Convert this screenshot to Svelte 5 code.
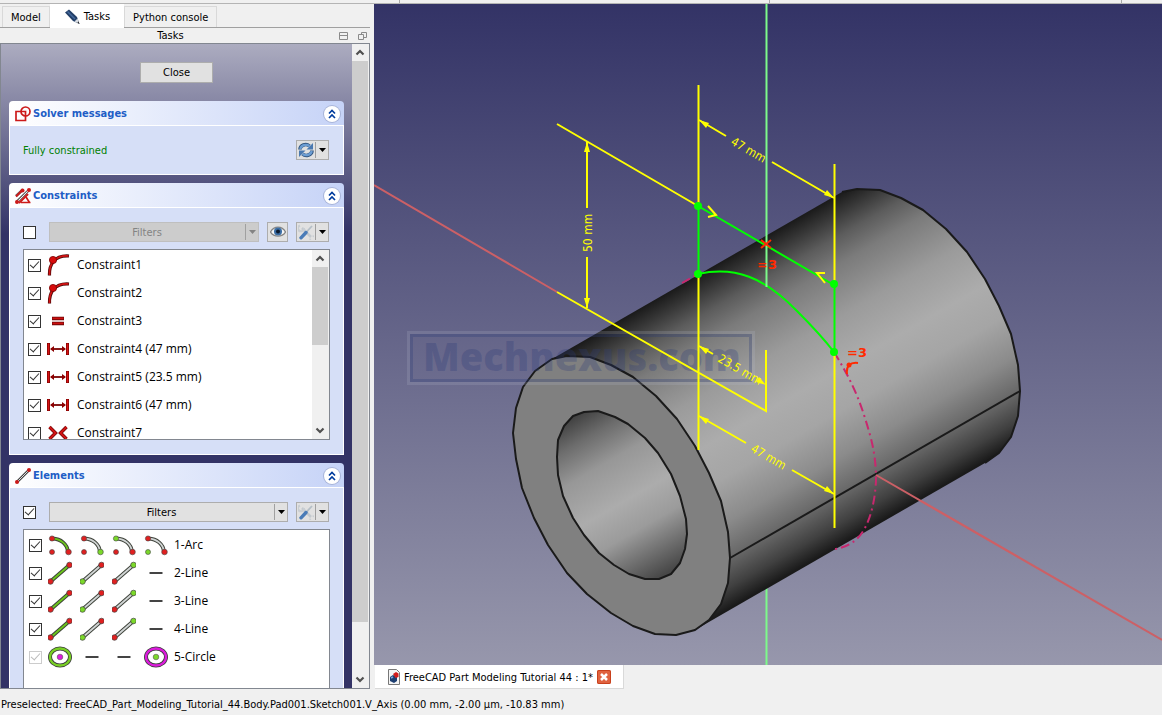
<script lang="ts">
	type Constraint = { name: string; icon: string; checked: boolean };
	type Element = { name: string; icons: string[]; checked: boolean; disabled?: boolean };

	const toolbars = [400, 370, 352];

	let constraints: Constraint[] = $state([
		{ name: 'Constraint1', icon: 'tangent', checked: true },
		{ name: 'Constraint2', icon: 'tangent', checked: true },
		{ name: 'Constraint3', icon: 'equal', checked: true },
		{ name: 'Constraint4 (47 mm)', icon: 'horizontal', checked: true },
		{ name: 'Constraint5 (23.5 mm)', icon: 'horizontal', checked: true },
		{ name: 'Constraint6 (47 mm)', icon: 'horizontal', checked: true },
		{ name: 'Constraint7', icon: 'symmetric', checked: true }
	]);

	let elements: Element[] = $state([
		{ name: '1-Arc', icons: ['arc-edge', 'arc-start', 'arc-end', 'arc-mid'], checked: true },
		{ name: '2-Line', icons: ['line-edge', 'line-start', 'line-end', 'none'], checked: true },
		{ name: '3-Line', icons: ['line-edge', 'line-start', 'line-end', 'none'], checked: true },
		{ name: '4-Line', icons: ['line-edge', 'line-start', 'line-end', 'none'], checked: true },
		{ name: '5-Circle', icons: ['circle-edge', 'none', 'none', 'circle-mid'], checked: true, disabled: true }
	]);

	let filterConstraints = $state(false);
	let filterElements = $state(true);

	// outline of the tube's front face, and the shift to its back face
	const face = [
		[567, 356], [590, 357], [611, 365], [633, 377], [656, 396], [677, 419], [695, 446], [709, 473],
		[721, 501], [728, 532], [730, 558], [728, 583], [721, 604], [709, 620], [695, 630], [676, 635],
		[655, 634], [633, 626], [611, 613], [587, 594], [567, 573], [548, 545], [534, 518], [522, 488],
		[516, 459], [513, 433], [516, 408], [523, 387], [535, 371], [552, 359]
	];
	const hole = [
		[557, 457], [558, 440], [564, 426], [573, 416], [584, 412], [598, 411], [615, 417], [628, 424],
		[645, 438], [658, 453], [671, 474], [680, 496], [686, 519], [687, 534], [685, 549], [680, 563],
		[671, 574], [659, 579], [645, 579], [629, 574], [614, 565], [599, 553], [584, 535], [573, 518],
		[563, 496], [558, 475]
	];
	const back = [face[29], ...face.slice(0, 15)].map(([x, y]) => [x + 290, y - 167]);
	const body = [face[29], ...back, face[14]];

	const pts = (list: number[][]) => list.map(p => p.join(',')).join(' ');

	const RED = '#e02020';
	const GREEN = '#7bd82a';
	const isMarked = (icon: string, part: string) => (icon.endsWith(part) ? GREEN : RED);
</script>

{#snippet dropArrow()}
	<svg class="drop" viewBox="0 0 7 4" aria-hidden="true"><path d="M0 0H7L3.5 4Z" fill="currentColor" /></svg>
{/snippet}

{#snippet chevron(up: boolean)}
	<svg class="chevron" viewBox="0 0 16 16" aria-hidden="true">
		<path d={up ? 'M4.500 10L8 6.500L11.500 10' : 'M4.500 6L8 9.500L11.500 6'} fill="none" stroke="#505050" stroke-width="2.200" />
	</svg>
{/snippet}

{#snippet collapse(title: string)}
	<button class="collapse" aria-label="Collapse {title}">
		<svg viewBox="0 0 16 16"><path d="M5 7.500L8 4.500L11 7.500M5 12L8 9L11 12" fill="none" stroke="#003c9e" stroke-width="1.700" /></svg>
	</button>
{/snippet}

{#snippet tools()}
	<button class="tool split" aria-label="Settings">
		<svg class="glyph" viewBox="0 0 16 16">
			<path d="M4 4L13 13" stroke="#c3c9ce" stroke-width="2.500" />
			<path d="M2 1.500A3 3 0 1 0 6 4" fill="none" stroke="#c9ced3" stroke-width="2" />
			<path d="M14.500 12A2.500 2.500 0 1 1 12 14.500" fill="none" stroke="#c9ced3" stroke-width="1.500" />
			<path d="M14 2L8 8.500" stroke="#b4bec6" stroke-width="1.800" />
			<path d="M8 8.500L3 13.800" stroke="#4a7cb8" stroke-width="3.400" stroke-linecap="round" />
		</svg>
		<span class="arrow">{@render dropArrow()}</span>
	</button>
{/snippet}

{#snippet constraintIcon(kind: string)}
	<svg class="icon" viewBox="0 0 24 24" aria-hidden="true">
		{#if kind === 'tangent'}
			<path d="M2.500 22.500C2 12 7 2 22 3" fill="none" stroke="#4a0505" stroke-width="3.200" />
			<path d="M2.500 22C2 12 7 2 21.500 3" fill="none" stroke="#d41414" stroke-width="1.700" />
			<circle cx="6" cy="7" r="3.600" fill="#d80c0c" stroke="#7a0000" stroke-width=".8" />
		{:else if kind === 'equal'}
			<path d="M5 9.500H17M5 14.500H17" stroke="#6e0505" stroke-width="3.400" />
			<path d="M5.500 9.300H16.500M5.500 14.300H16.500" stroke="#cc1010" stroke-width="1.800" />
		{:else if kind === 'horizontal'}
			<path d="M1.500 6V18M20.500 6V18" stroke="#7a0000" stroke-width="3" />
			<path d="M1.500 6.500V17.500M20.500 6.500V17.500" stroke="#d81414" stroke-width="1.600" />
			<path d="M4 12H18" stroke="#7a0000" stroke-width="1.800" />
			<path d="M3 12L7 9V15ZM19 12L15 9V15Z" fill="#8c0000" />
		{:else}
			<path d="M2.500 6L8.500 12L2.500 18M19.500 6L13.500 12L19.500 18" fill="none" stroke="#6e0505" stroke-width="3.400" />
			<path d="M2.500 6L8.500 12L2.500 18M19.500 6L13.500 12L19.500 18" fill="none" stroke="#d01414" stroke-width="2" />
		{/if}
	</svg>
{/snippet}

{#snippet elementIcon(kind: string)}
	<svg class="icon" viewBox="0 0 24 24" aria-hidden="true">
		{#if kind.startsWith('arc')}
			<path d="M4.500 5.500C13 6 19 11 20 18.500" fill="none" stroke="#3c4038" stroke-width="3.800" />
			<path d="M4.500 5.500C13 6 19 11 20 18.500" fill="none" stroke={kind === 'arc-edge' ? '#6cc41c' : '#d0d4d4'} stroke-width="1.900" />
			<circle cx="4" cy="5.500" r="2.600" fill={isMarked(kind, 'end')} stroke="#444" stroke-width=".6" />
			<circle cx="20.500" cy="19" r="2.800" fill={isMarked(kind, 'start')} stroke="#444" stroke-width=".6" />
			<circle cx="4" cy="19" r="2.500" fill={isMarked(kind, 'mid')} stroke="#444" stroke-width=".6" />
		{:else if kind.startsWith('line')}
			<path d="M2.500 20.500L21.500 4" stroke="#3c4038" stroke-width="3.800" />
			<path d="M2.500 20.500L21.500 4" stroke={kind === 'line-edge' ? '#6cc41c' : '#d0d4d4'} stroke-width="1.900" />
			<circle cx="2.500" cy="20.500" r="2.800" fill={isMarked(kind, 'start')} stroke="#444" stroke-width=".7" />
			<circle cx="21.500" cy="4" r="2.800" fill={isMarked(kind, 'end')} stroke="#444" stroke-width=".7" />
		{:else if kind.startsWith('circle')}
			<ellipse cx="12" cy="12" rx="10" ry="8.500" fill="none" stroke="#3c3c3c" stroke-width="4" />
			<ellipse cx="12" cy="12" rx="10" ry="8.500" fill="none" stroke={kind === 'circle-edge' ? '#78cf24' : '#dc1cdc'} stroke-width="2.300" />
			<circle cx="12" cy="12" r="2.800" fill={kind === 'circle-edge' ? '#dc1cdc' : GREEN} stroke="#555" stroke-width=".6" />
		{:else}
			<path d="M5.500 12H18.500" stroke="#444" stroke-width="2" />
		{/if}
	</svg>
{/snippet}

<div class="app">
	<div class="toolbars">
		{#each toolbars as width}
			<span style="width: {width}px"></span>
		{/each}
	</div>

	<main>
		<aside class="dock">
			<div class="tabs" role="tablist">
				<button class="tab" role="tab" aria-selected="false">Model</button>
				<button class="tab active" role="tab" aria-selected="true">
					<svg class="pencil" viewBox="0 0 16 16" aria-hidden="true">
						<path d="M1 3.500L5 .5L13 8L15.500 15L9 12Z" fill="#223f68" />
						<path d="M3.500 2.500L11 10" stroke="#44699c" stroke-width="1.500" />
						<path d="M10.500 12.500L13.500 9.500L15.500 15Z" fill="#d9dde2" />
						<path d="M13.300 13.800L14.600 12.500L15.500 15Z" fill="#222" />
					</svg>
					Tasks
				</button>
				<button class="tab" role="tab" aria-selected="false">Python console</button>
			</div>
			<div class="dock-title">
				<span>Tasks</span>
				<button aria-label="Dock panel">
					<svg viewBox="0 0 9 9"><path d="M.5 1.500H8.500V8.500H.5ZM.5 4.500H8.500" fill="none" stroke="#8a8a8a" /></svg>
				</button>
				<button aria-label="Float panel">
					<svg viewBox="0 0 9 9"><path d="M.5 3.500H5.500V8.500H.5ZM3.500 3V1.500H8.500V6.500H6" fill="none" stroke="#8a8a8a" /></svg>
				</button>
			</div>

			<div class="task-view">
				<div class="task-content">
					<button class="close">Close</button>

					<section class="box">
						<header>
							<svg class="head-icon" viewBox="0 0 16 16" aria-hidden="true">
								<path d="M1 5.500H10.500V14.500H1Z" fill="none" stroke="#cc1a1a" stroke-width="1.700" />
								<circle cx="10.500" cy="5.500" r="4.500" fill="none" stroke="#cc1a1a" stroke-width="1.700" />
							</svg>
							<h2>Solver messages</h2>
							{@render collapse('Solver messages')}
						</header>
						<div class="box-body">
							<div class="controls">
								<span class="solved">Fully constrained</span>
								<button class="tool split" aria-label="Update">
									<svg class="glyph" viewBox="0 0 16 16">
										<path d="M2 7.500C2 3 8 1 11.500 4" fill="none" stroke="#31557f" stroke-width="3.600" />
										<path d="M2.300 7C2.800 3.200 8 1.500 11.500 4" fill="none" stroke="#6c9dd2" stroke-width="2.200" />
										<path d="M15 1V7.500H8.500Z" fill="#4a79b0" />
										<path d="M14 8.500C14 13 8 15 4.500 12" fill="none" stroke="#31557f" stroke-width="3.600" />
										<path d="M13.700 9C13.200 12.800 8 14.500 4.500 12" fill="none" stroke="#6c9dd2" stroke-width="2.200" />
										<path d="M1 15V8.500H7.500Z" fill="#4a79b0" />
									</svg>
									<span class="arrow">{@render dropArrow()}</span>
								</button>
							</div>
						</div>
					</section>

					<section class="box">
						<header>
							<svg class="head-icon" viewBox="0 0 16 16" aria-hidden="true">
								<path d="M1 8L8 1.500M2 13.500L13.500 2.500" stroke="#666" stroke-width="2.600" />
								<path d="M1 8.500L7 2.500M4 15L13 6" stroke="#cc1a1a" stroke-width="2" />
								<path d="M2 14L14 2" stroke="#eee" stroke-width="1" />
								<path d="M6 14.500H15.500M11 9L14.500 14.500" stroke="#cc1a1a" stroke-width="1.700" />
								<circle cx="7.500" cy="2.500" r="2" fill="#cc1a1a" /><circle cx="14" cy="2" r="2" fill="#cc1a1a" />
								<circle cx="2" cy="14" r="2" fill="#cc1a1a" />
							</svg>
							<h2>Constraints</h2>
							{@render collapse('Constraints')}
						</header>
						<div class="box-body">
							<div class="controls">
								<input type="checkbox" aria-label="Enable constraint filters" bind:checked={filterConstraints} />
								<div class="filters" class:off={!filterConstraints}>
									<select aria-label="Constraint filters" disabled={!filterConstraints}><option>Filters</option></select>
									<span class="arrow">{@render dropArrow()}</span>
								</div>
								<button class="tool" aria-label="Show or hide constraints">
									<svg class="glyph" viewBox="0 0 16 16">
										<path d="M.5 8C4 1.500 12 1.500 15.500 8C12 13.500 4 13.500 .5 8Z" fill="#f5f5f5" stroke="#858585" stroke-width="1.300" />
										<circle cx="8" cy="7.500" r="4" fill="#3b6ea5" /><circle cx="8" cy="7.500" r="2" fill="#0c1b30" />
									</svg>
								</button>
								{@render tools()}
							</div>
							<div class="list">
								<ul>
									{#each constraints as item}
										<li>
											<label>
												<input type="checkbox" bind:checked={item.checked} />
												{@render constraintIcon(item.icon)}
												<span>{item.name}</span>
											</label>
										</li>
									{/each}
								</ul>
								<div class="scrollbar">
									{@render chevron(true)}
									<div class="track"><div class="thumb" style="height: 50%"></div></div>
									{@render chevron(false)}
								</div>
							</div>
						</div>
					</section>

					<section class="box">
						<header>
							<svg class="head-icon" viewBox="0 0 16 16" aria-hidden="true">
								<path d="M2 14L14 2" stroke="#444" stroke-width="2.600" />
								<path d="M2 14L14 2" stroke="#ddd" stroke-width="1" />
								<circle cx="2" cy="14" r="2" fill="#cc1a1a" /><circle cx="14" cy="2" r="2" fill="#cc1a1a" />
							</svg>
							<h2>Elements</h2>
							{@render collapse('Elements')}
						</header>
						<div class="box-body">
							<div class="controls">
								<input type="checkbox" aria-label="Enable element filters" bind:checked={filterElements} />
								<div class="filters" class:off={!filterElements}>
									<select aria-label="Element filters" disabled={!filterElements}><option>Filters</option></select>
									<span class="arrow">{@render dropArrow()}</span>
								</div>
								{@render tools()}
							</div>
							<div class="list">
								<ul class="elements">
									{#each elements as item}
										<li>
											<label>
												<input type="checkbox" bind:checked={item.checked} disabled={item.disabled} />
												<span class="icons">
													{#each item.icons as icon}
														{@render elementIcon(icon)}
													{/each}
												</span>
												<span>{item.name}</span>
											</label>
										</li>
									{/each}
								</ul>
							</div>
						</div>
					</section>
				</div>
				<div class="scrollbar">
					{@render chevron(true)}
					<div class="track"><div class="thumb" style="height: 92%"></div></div>
					{@render chevron(false)}
				</div>
			</div>
		</aside>

		<div class="workspace">
			<svg class="scene" viewBox="374 4 788 661" preserveAspectRatio="xMidYMid slice" role="img" aria-label="3D view">
				<defs>
					<linearGradient id="sky" x1="0" y1="0" x2="0" y2="1">
						<stop offset="0" stop-color="#333366" />
						<stop offset="1" stop-color="#9797ac" />
					</linearGradient>
					<linearGradient id="shell" gradientUnits="userSpaceOnUse" x1="552" y1="359" x2="704" y2="623">
						<stop offset="0" stop-color="#1a1a1a" />
						<stop offset=".05" stop-color="#353535" />
						<stop offset=".12" stop-color="#5c5c5c" />
						<stop offset=".2" stop-color="#7b7b7b" />
						<stop offset=".35" stop-color="#9b9b9b" />
						<stop offset=".5" stop-color="#acacac" />
						<stop offset=".62" stop-color="#a5a5a5" />
						<stop offset=".75" stop-color="#8b8b8b" />
						<stop offset=".86" stop-color="#666" />
						<stop offset=".94" stop-color="#404040" />
						<stop offset="1" stop-color="#1a1a1a" />
					</linearGradient>
					<linearGradient id="bore" gradientUnits="userSpaceOnUse" x1="576" y1="412" x2="668" y2="572">
						<stop offset="0" stop-color="#3c3c3c" />
						<stop offset=".15" stop-color="#6c6c6c" />
						<stop offset=".32" stop-color="#979797" />
						<stop offset=".55" stop-color="#acacac" />
						<stop offset=".72" stop-color="#9b9b9b" />
						<stop offset="1" stop-color="#484848" />
					</linearGradient>
				</defs>
				<rect x="374" y="4" width="788" height="661" fill="url(#sky)" />

				<!-- axes behind the part -->
				<g fill="none" stroke-width="2">
					<path d="M374 185L557 292M876 475L1162 640" stroke="#cc6066" />
					<path d="M766.500 560V665" stroke="#7dfa8a" />
				</g>

				<!-- tube -->
				<polygon points={pts(body)} fill="url(#shell)" />
				<g fill="none" stroke="#1a1a1a" stroke-width="2" stroke-linejoin="round">
					<polyline points={pts(back)} />
					<polygon points={pts(face)} fill="#808080" />
					<polygon points={pts(hole)} fill="url(#bore)" />
					<path d="M730 558L1020 391" />
				</g>
				<path d="M876 475L1019 557.500" stroke="#cc6066" stroke-width="2" />

				<!-- watermark -->
				<g class="watermark">
					<rect x="408.500" y="332.500" width="345" height="51" fill="none" stroke="#b4b8cc" stroke-opacity=".2" stroke-width="3" />
					<rect x="411.500" y="335.500" width="339" height="45" fill="none" stroke="#2c3b78" stroke-opacity=".3" stroke-width="3" />
					<text x="423" y="371">Mechnexus.com</text>
				</g>

				<path
					d="M834 352C850 378 858 396 864 415C872 440 876 455 876 480C875 505 868 532 853 542Q845 548 834 549M682 283L698 274"
					fill="none" stroke="#c8286e" stroke-width="2" stroke-dasharray="9 4 2 4"
				/>

				<!-- dimensions -->
				<g fill="none" stroke="#ffff00" stroke-width="2">
					<path d="M557 124L698 206M557 292L766 411V350M698.500 85V206M698.500 274V450M834.500 164V285M834.500 352V528" />
					<path d="M587 142V208M587 257V308M699 120L726 136M772 162L834 198M699 346L713 354M699 416L746 443M792 470L834 494" />
				</g>
				<g fill="#ffff00">
					<path d="M587 142L590 152H584ZM587 308L584 298H590Z" />
					<path d="M699 120L709 123L706 128ZM834 198L824 195L827 190Z" />
					<path d="M699 346L709 349L706 354ZM766 385L756 382L759 377Z" />
					<path d="M699 416L709 419L706 424ZM834 494L824 491L827 486Z" />
				</g>
				<g class="dimension">
					<text transform="translate(730 144) rotate(30)">47 mm</text>
					<text transform="translate(717 361) rotate(30)">23.5 mm</text>
					<text transform="translate(750 451) rotate(30)">47 mm</text>
					<text transform="translate(592 252) rotate(-90)">50 mm</text>
				</g>

				<!-- sketch geometry -->
				<g fill="none" stroke="#00ff00" stroke-width="2">
					<path d="M698.500 206V274M698 206L834 285M834.500 285V352M698 274C735 266 764 277 797 311C813 327 824 339 834 352" />
					<path d="M766.500 4V287" stroke="#7dfa8a" />
				</g>
				<g fill="#00ff00">
					<circle cx="698" cy="206" r="4" /><circle cx="698" cy="274" r="4" />
					<circle cx="834" cy="284" r="4" /><circle cx="834" cy="352" r="4" />
				</g>
				<path d="M708 206L716 215L708 217M825 283L817 273H825" fill="none" stroke="#ffff00" stroke-width="2" />
				<g fill="none" stroke="#ff2a00" stroke-width="2">
					<path d="M761 240L771 248M771 240L761 248M847 374C846 366 850 362 858 363" />
				</g>
				<circle cx="849" cy="365" r="2.500" fill="#ff2a00" />
				<g class="equality">
					<text x="757" y="269">=3</text>
					<text x="847" y="357">=3</text>
				</g>
			</svg>

			<div class="documents" role="tablist">
				<div class="document">
					<svg class="doc-icon" viewBox="0 0 12 16" aria-hidden="true">
						<path d="M.5 .5H8.500L11.500 3.500V15.500H.5Z" fill="#f4f4f4" stroke="#777" />
						<path d="M2 8L5 6L9 8V12L6 14L2 12Z" fill="#1c3e70" />
						<path d="M5 5L8 3L10.500 4.500V8L7.500 9Z" fill="#d21c1c" />
						<path d="M3 9L5 8" stroke="#7ba5dd" stroke-width="1.500" />
					</svg>
					<button role="tab" aria-selected="true" class="doc-name">FreeCAD Part Modeling Tutorial 44 : 1*</button>
					<button class="doc-close" aria-label="Close document">
						<svg viewBox="0 0 14 14"><path d="M4 4L10 10M10 4L4 10" stroke="#fff" stroke-width="2.500" /></svg>
					</button>
				</div>
			</div>
		</div>
	</main>

	<footer>Preselected: FreeCAD_Part_Modeling_Tutorial_44.Body.Pad001.Sketch001.V_Axis (0.00 mm, -2.00 µm, -10.83 mm)</footer>
</div>

<style>
	:global(body) {
		margin: 0;
		background: #f0f0f0;
	}

	.app {
		display: grid;
		grid-template-rows: 4px minmax(0, 1fr) 26px;
		height: 100vh;
		overflow: hidden;
		background: #f0f0f0;
		color: #000;
		font: 11px/18px 'DejaVu Sans Condensed', 'DejaVu Sans', sans-serif;
	}

	.app * {
		box-sizing: border-box;
	}

	button,
	select {
		margin: 0;
		padding: 0;
		border: 0;
		border-radius: 0;
		background: none;
		color: inherit;
		font: inherit;
	}

	svg {
		display: block;
		flex: none;
	}

	.toolbars {
		display: flex;
		border-bottom: 1px solid #b4b4b4;
	}

	.toolbars span {
		border-right: 1px solid #a8a8a8;
	}

	main {
		display: flex;
		gap: 4px;
		min-height: 0;
	}

	.dock {
		display: flex;
		flex: 0 0 370px;
		flex-direction: column;
		min-height: 0;
	}

	.tabs {
		display: flex;
		align-items: flex-end;
		height: 24px;
		padding-left: 2px;
		border-bottom: 1px solid #a0a0a0;
	}

	.tab {
		display: flex;
		align-items: center;
		gap: 4px;
		height: 21px;
		padding: 2px 8px 0;
		border: 1px solid #d9d9d9;
		border-bottom: 0;
	}

	.tab.active {
		height: 24px;
		margin-bottom: -1px;
		padding: 0 13px;
		border-color: #fff;
		background: #fff;
	}

	.pencil {
		width: 16px;
		height: 16px;
	}

	.dock-title {
		display: flex;
		align-items: center;
		gap: 10px;
		height: 15px;
		padding-right: 3px;
	}

	.dock-title span {
		flex: 1;
		padding-left: 12px;
		text-align: center;
	}

	.dock-title svg {
		width: 9px;
		height: 9px;
	}

	.task-view {
		display: flex;
		flex: 1;
		min-height: 0;
		border: 1px solid #828790;
	}

	.task-content {
		display: flex;
		flex: 1;
		flex-direction: column;
		align-items: stretch;
		gap: 8px;
		min-width: 0;
		padding: 18px 8px 0;
		overflow: hidden;
		background: #333366 linear-gradient(#acacc0, #333366) top / 100% 190px no-repeat;
	}

	.close {
		align-self: center;
		flex: none;
		width: 73px;
		height: 21px;
		margin-bottom: 10px;
		border: 1px solid #adadad;
		background: #e1e1e1;
	}

	.box {
		flex: none;
		border-radius: 4px 4px 0 0;
		overflow: hidden;
	}

	.box header {
		display: flex;
		align-items: center;
		gap: 2px;
		height: 25px;
		padding: 1px 4px 0 6px;
		border-bottom: 1px solid #fff;
		background: linear-gradient(to right, #fff, #c6d3f7);
	}

	.head-icon {
		width: 16px;
		height: 16px;
	}

	h2 {
		flex: 1;
		margin: 0;
		color: #215dc6;
		font-size: 11px;
		font-weight: bold;
	}

	.collapse {
		width: 16px;
		height: 16px;
		border-radius: 50%;
		background: #fff;
		box-shadow: 0 0 0 1px #a8b4d8;
	}

	.box-body {
		padding: 14px 13px;
		border: 1px solid #fff;
		border-top: 0;
		background: #d6dff7;
	}

	.controls {
		display: flex;
		align-items: center;
		gap: 8px;
		height: 20px;
		padding-right: 1px;
	}

	.controls input {
		margin-right: 5px;
	}

	.solved {
		flex: 1;
		padding-top: 2px;
		color: #008000;
	}

	.tool {
		display: flex;
		align-items: center;
		flex: none;
		width: 21px;
		height: 20px;
		padding-left: 2px;
		border: 1px solid #adadad;
		background: #e1e1e1;
	}

	.tool.split {
		width: 33px;
		padding-left: 1px;
	}

	.glyph {
		width: 16px;
		height: 16px;
	}

	.arrow {
		display: flex;
		align-items: center;
		height: 16px;
		margin-left: 1px;
		padding-left: 3px;
		border-left: 1px solid #a0a0a0;
	}

	.drop {
		width: 7px;
		height: 4px;
	}

	.filters {
		display: flex;
		flex: 1;
		align-items: center;
		height: 20px;
		padding-right: 2px;
		border: 1px solid #adadad;
		background: #e1e1e1;
	}

	.filters.off {
		border-color: #bfbfbf;
		background: #ccc;
		color: #838383;
	}

	select {
		flex: 1;
		height: 18px;
		padding-top: 1px;
		appearance: none;
		opacity: 1;
		text-align-last: center;
	}

	input {
		display: flex;
		flex: none;
		align-items: center;
		justify-content: center;
		width: 13px;
		height: 13px;
		margin: 0;
		border: 1px solid #333;
		background: #fff;
		color: #333;
		appearance: none;
	}

	input:checked::before {
		width: 4px;
		height: 8px;
		margin-bottom: 3px;
		border: solid currentColor;
		border-width: 0 1px 1px 0;
		content: '';
		transform: rotate(42deg);
	}

	input:disabled {
		border-color: #ccc;
		color: #bbb;
	}

	.list {
		display: flex;
		height: 191px;
		margin-top: 7px;
		border: 1px solid #828790;
		background: #fff;
		overflow: hidden;
	}

	.list ul {
		flex: 1;
		margin: 0;
		padding: 1px 0 0 4px;
		list-style: none;
	}

	.list label {
		display: flex;
		align-items: center;
		gap: 6px;
		height: 28px;
		font: 12px/16px 'Open Sans', 'Noto Sans', sans-serif;
	}

	.list ul.elements {
		padding-left: 5px;
	}

	.icons {
		display: flex;
		gap: 8px;
	}

	.icon {
		width: 24px;
		height: 24px;
	}

	.scrollbar {
		display: flex;
		flex: 0 0 17px;
		flex-direction: column;
		background: #f0f0f0;
	}

	.track {
		flex: 1;
	}

	.thumb {
		margin-right: 1px;
		background: #cdcdcd;
	}

	.chevron {
		width: 16px;
		height: 17px;
	}

	.workspace {
		display: flex;
		flex: 1;
		flex-direction: column;
		min-width: 0;
	}

	.scene {
		flex: 1;
		width: 100%;
		min-height: 0;
	}

	.watermark text {
		fill: #2c3b78;
		fill-opacity: 0.28;
		font: 800 38px 'Open Sans', sans-serif;
	}

	.dimension text {
		fill: #ffff00;
		font: 12px 'DejaVu Sans Condensed', 'DejaVu Sans', sans-serif;
	}

	.equality text {
		fill: #ff2a00;
		font: bold 13px 'DejaVu Sans', sans-serif;
	}

	.documents {
		display: flex;
		height: 24px;
		padding-left: 1px;
	}

	.document {
		display: flex;
		align-items: center;
		gap: 4px;
		padding: 0 12px 0 13px;
		border-right: 1px solid #d9d9d9;
		border-bottom: 1px solid #d9d9d9;
		background: #fff;
	}

	.doc-icon {
		width: 12px;
		height: 16px;
	}

	.doc-name {
		padding-top: 2px;
		white-space: nowrap;
	}

	.doc-close {
		width: 14px;
		height: 14px;
		border-radius: 2px;
		background: #e0623f;
		box-shadow: inset 0 0 0 1px #c8401c;
	}

	footer {
		padding: 7px 1px 0;
		white-space: nowrap;
	}
</style>
